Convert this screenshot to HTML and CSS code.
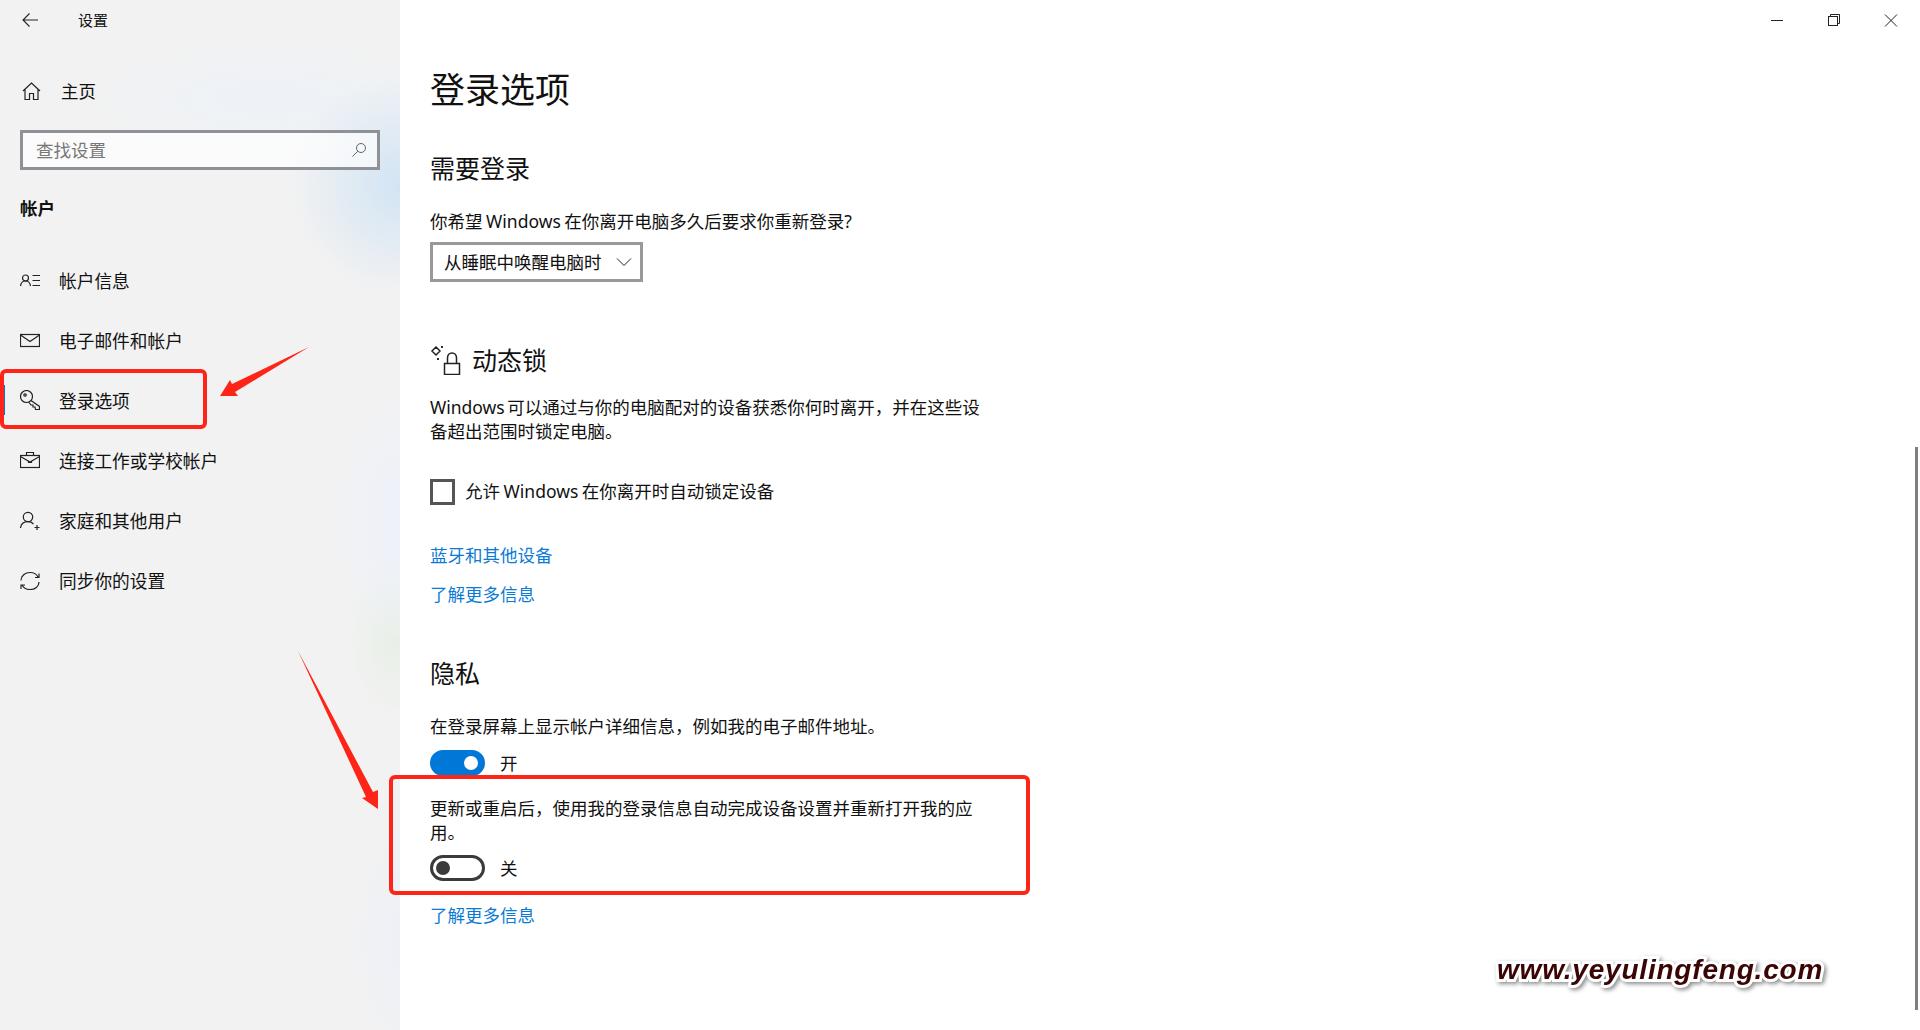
FILE: index.html
```html
<!DOCTYPE html>
<html lang="zh-CN">
<head>
    <meta charset="utf-8">
    <title>设置</title>
    <link rel="stylesheet" href="styles.css">
</head>
<body>
    <aside class="sidebar">
        <div class="app-bar">
            <svg class="icon back-icon" viewBox="0 0 20 20"><path d="M18 10H3M9.5 3.5L3 10l6.5 6.5"/></svg>
            <span class="app-title">设置</span>
        </div>
        <div class="home-row">
            <svg class="icon" viewBox="0 0 20 20"><path d="M2 10L10.5 2L19 10M4 8.5V18.5H8.5V12.5H12.5V18.5H17V8.5"/></svg>
            <span>主页</span>
        </div>
        <div class="search-box">
            <span>查找设置</span>
            <svg class="icon search-icon" viewBox="0 0 16 16"><circle cx="10" cy="6" r="4.5"/><path d="M6.8 9.2L1.5 14.5"/></svg>
        </div>
        <div class="section-label">帐户</div>
        <nav class="nav-list">
            <div class="nav-item">
                <svg class="icon" viewBox="0 0 20 20"><circle cx="5.5" cy="8" r="3"/><path d="M0.5 16C1 12.5 3 11 5.5 11S10 12.5 10.5 16M12.5 5.5H20M12.5 10.5H20M12.5 15.5H20"/></svg>
                <span>帐户信息</span>
            </div>
            <div class="nav-item">
                <svg class="icon" viewBox="0 0 20 20"><rect x="0.5" y="4.5" width="19" height="12"/><path d="M0.5 5L10 11.5L19.5 5"/></svg>
                <span>电子邮件和帐户</span>
            </div>
            <div class="nav-item active">
                <svg class="icon" viewBox="0 0 20 20"><circle cx="6.5" cy="6.5" r="6"/><circle cx="5" cy="5" r="1.2"/><path d="M11 10.5L19.5 16.5V19.5H15.5L15 17H13V15H11L9 12.5"/></svg>
                <span>登录选项</span>
            </div>
            <div class="nav-item">
                <svg class="icon" viewBox="0 0 20 20"><rect x="0.5" y="5.5" width="19" height="12"/><path d="M6.5 5.5V2.5H13.5V5.5M0.5 6.5L10 12L19.5 6.5M8.5 10.5V12.5H11.5V10.5"/></svg>
                <span>连接工作或学校帐户</span>
            </div>
            <div class="nav-item">
                <svg class="icon" viewBox="0 0 20 20"><circle cx="8" cy="7" r="4.7"/><path d="M0.5 18C1 14 4 11.7 8 11.7C10 11.7 12 12.4 13.5 14M17 15V20M14.5 17.5H19.5"/></svg>
                <span>家庭和其他用户</span>
            </div>
            <div class="nav-item">
                <svg class="icon" viewBox="0 0 20 20"><path d="M1 10.5C1 6 5 2.5 10 2.5C13.5 2.5 16.5 4 18 7M19 3.5V7.5H15M19 12C19 16.5 15 19.5 10 19.5C6.5 19.5 3.5 18 2 15M1 19V15H5"/></svg>
                <span>同步你的设置</span>
            </div>
        </nav>
    </aside>

    <main class="content">
        <div class="window-controls">
            <div class="win-btn"><svg class="icon" viewBox="0 0 14 14"><path d="M1 7.5H13"/></svg></div>
            <div class="win-btn"><svg class="icon" viewBox="0 0 14 14"><rect x="1.5" y="3.5" width="9" height="9"/><path d="M3.5 3.5V1.5H12.5V10.5H10.5"/></svg></div>
            <div class="win-btn"><svg class="icon" viewBox="0 0 14 14"><path d="M1 1.5L13 13.5M13 1.5L1 13.5"/></svg></div>
        </div>

        <h1>登录选项</h1>

        <h2 class="require-head">需要登录</h2>
        <p class="question">你希望 Windows 在你离开电脑多久后要求你重新登录?</p>
        <div class="select-box">
            <span>从睡眠中唤醒电脑时</span>
            <svg class="icon" viewBox="0 0 16 16"><path d="M1 4.5L8 11.5L15 4.5"/></svg>
        </div>

        <div class="lock-head">
            <svg class="icon" viewBox="0 0 31 30"><path d="M6 2L10 6L6 10L2 6ZM11 2H13M12 1V3M7 14H9M8 13V15M14.5 18.5H29.5V29.5H14.5ZM17.5 18.5V13C17.5 10 19.5 8 22 8S26.5 10 26.5 13V18.5"/></svg>
            <h2>动态锁</h2>
        </div>
        <p class="lock-desc">Windows 可以通过与你的电脑配对的设备获悉你何时离开，并在这些设备超出范围时锁定电脑。</p>
        <div class="check-row">
            <span class="checkbox"></span>
            <span class="check-label">允许 Windows 在你离开时自动锁定设备</span>
        </div>
        <a class="link link-devices">蓝牙和其他设备</a>
        <a class="link link-more">了解更多信息</a>

        <h2 class="privacy-head">隐私</h2>
        <p class="privacy-text">在登录屏幕上显示帐户详细信息，例如我的电子邮件地址。</p>
        <div class="toggle-row">
            <span class="toggle on"></span>
            <span>开</span>
        </div>
        <p class="restart-text">更新或重启后，使用我的登录信息自动完成设备设置并重新打开我的应用。</p>
        <div class="toggle-row off-row">
            <span class="toggle"></span>
            <span>关</span>
        </div>
        <a class="link link-last">了解更多信息</a>
    </main>

    <div class="scroll-thumb"></div>

    <svg class="marks" viewBox="0 0 1920 1030">
        <rect x="2" y="371" width="203" height="56" rx="4"/>
        <rect x="391" y="777" width="637" height="116" rx="4"/>
        <polygon class="arrow" points="309,347 232,384 230,380 220,396 238,396 235,392"/>
        <polygon class="arrow" points="298,651 373,792 378,790 378,809 362,798 366,797"/>
    </svg>

    <div class="watermark">www.yeyulingfeng.com</div>
</body>
</html>
```

FILE: styles.css
```css
* {
    box-sizing: border-box;
}

html, body {
    margin: 0;
    height: 1030px;
    overflow: hidden;
}

body {
    display: flex;
    font-family: "Noto Sans", "Noto Sans CJK SC", sans-serif;
    font-size: 17.5px;
    line-height: 24px;
    color: #111;
    background-color: #fff;
}

.icon {
    display: block;
    width: 20px;
    height: 20px;
    flex: none;
    fill: none;
    stroke: #222;
    stroke-width: 1.2;
}

/* sidebar */
.sidebar {
    width: 400px;
    flex: none;
    background-color: #f2f2f2;
    background-image:
        radial-gradient(ellipse 110px 110px at 400px 185px, #d2e4f4 0, rgba(210, 228, 244, 0) 100%),
        radial-gradient(ellipse 190px 60px at 270px 100px, #edf2f8 0, rgba(237, 242, 248, 0) 100%),
        radial-gradient(ellipse 70px 130px at 400px 520px, #edf1fa 0, rgba(237, 241, 250, 0) 100%),
        radial-gradient(ellipse 50px 80px at 395px 640px, #e8efe6 0, rgba(232, 239, 230, 0) 100%),
        radial-gradient(ellipse 50px 120px at 400px 940px, #edf0f7 0, rgba(237, 240, 247, 0) 100%);
}

.app-bar {
    display: flex;
    align-items: center;
    height: 40px;
    padding-left: 20px;
}

.back-icon {
    stroke-width: 1.1;
}

.app-title {
    margin-left: 38px;
    font-size: 15px;
}

.home-row {
    display: flex;
    align-items: center;
    gap: 20px;
    height: 40px;
    margin-top: 31px;
    padding-left: 21px;
}

.search-box {
    display: flex;
    align-items: center;
    justify-content: space-between;
    width: 360px;
    height: 40px;
    margin: 19px 0 0 20px;
    padding: 0 10px 0 13px;
    border: 3px solid #8e9195;
    background-color: rgba(255, 255, 255, 0.65);
    color: #777;
}

.search-icon {
    width: 16px;
    height: 16px;
    stroke: #555;
    stroke-width: 0.9;
}

.section-label {
    margin: 26px 0 0 20px;
    font-weight: 700;
}

.nav-list {
    margin-top: 30px;
    font-size: 17.7px;
}

.nav-item {
    position: relative;
    display: flex;
    align-items: center;
    gap: 19px;
    height: 60px;
    padding-left: 20px;
}

.nav-item span {
    padding-top: 2px;
}

.nav-item.active::before {
    content: "";
    position: absolute;
    left: 3px;
    top: 15px;
    width: 2px;
    height: 30px;
    background-color: #0078d7;
}

/* right pane */
.content {
    flex: 1;
    padding-left: 30px;
}

.window-controls {
    display: flex;
    justify-content: flex-end;
    height: 40px;
    padding-right: 1px;
}

.win-btn {
    display: flex;
    align-items: center;
    justify-content: center;
    width: 57px;
    height: 40px;
}

.win-btn .icon {
    width: 14px;
    height: 14px;
    stroke-width: 1;
}

h1 {
    margin: 26px 0 0;
    font-size: 35px;
    line-height: 48px;
    font-weight: 400;
}

h2 {
    margin: 0;
    font-size: 25px;
    line-height: 34px;
    font-weight: 400;
}

p {
    margin: 0;
    width: 556px;
}

.require-head {
    margin-top: 37px;
}

.question {
    margin-top: 24px;
    word-spacing: -1px;
}

.select-box {
    display: flex;
    align-items: center;
    justify-content: space-between;
    width: 213px;
    height: 40px;
    margin-top: 9px;
    padding: 0 8px 0 11px;
    border: 3px solid #999;
}

.select-box .icon {
    width: 16px;
    height: 16px;
    stroke-width: 1;
}

.lock-head {
    display: flex;
    align-items: center;
    gap: 11px;
    margin-top: 61px;
}

.lock-head .icon {
    width: 31px;
    height: 30px;
    stroke-width: 1.5;
}

.lock-desc {
    margin-top: 18px;
    word-spacing: -2px;
}

.check-row {
    display: flex;
    align-items: center;
    gap: 10px;
    height: 26px;
    margin-top: 36px;
}

.check-label {
    padding-bottom: 2px;
    word-spacing: -1px;
}

.checkbox {
    width: 25px;
    height: 26px;
    border: 3px solid #555;
}

.link {
    display: block;
    color: #0a7ad6;
}

.link-devices {
    margin-top: 38px;
}

.link-more {
    margin-top: 15px;
}

.privacy-head {
    margin-top: 50px;
}

.privacy-text {
    margin-top: 24px;
}

.toggle-row {
    display: flex;
    align-items: center;
    gap: 15px;
    height: 26px;
    margin-top: 12px;
}

.off-row {
    margin-top: 11px;
}

.toggle {
    position: relative;
    width: 55px;
    height: 26px;
    border: 3px solid #3b3b3b;
    border-radius: 13px;
}

.toggle::after {
    content: "";
    position: absolute;
    left: 3px;
    top: 3px;
    width: 14px;
    height: 14px;
    border-radius: 50%;
    background-color: #3b3b3b;
}

.toggle.on {
    border-color: #0078d7;
    background-color: #0078d7;
}

.toggle.on::after {
    left: auto;
    right: 4px;
    background-color: #fff;
}

.restart-text {
    margin-top: 20px;
}

.link-last {
    margin-top: 22px;
}

/* stuff lying over the page */
.scroll-thumb {
    position: absolute;
    left: 1915px;
    top: 447px;
    width: 3px;
    height: 563px;
    background-color: #7f7f7f;
}

.marks {
    position: absolute;
    left: 0;
    top: 0;
    width: 1920px;
    height: 1030px;
    pointer-events: none;
}

.marks rect {
    fill: none;
    stroke: #fe2518;
    stroke-width: 4;
}

.marks .arrow {
    fill: #fe2518;
}

.watermark {
    position: absolute;
    left: 1497px;
    top: 950px;
    font-family: "Liberation Sans", sans-serif;
    font-size: 28px;
    line-height: 40px;
    font-weight: 700;
    font-style: italic;
    letter-spacing: 0.8px;
    color: #3a0505;
    -webkit-text-stroke: 6px #fff;
    paint-order: stroke fill;
    filter: drop-shadow(2px 2px 2px rgba(0, 0, 0, 0.45));
}
```
